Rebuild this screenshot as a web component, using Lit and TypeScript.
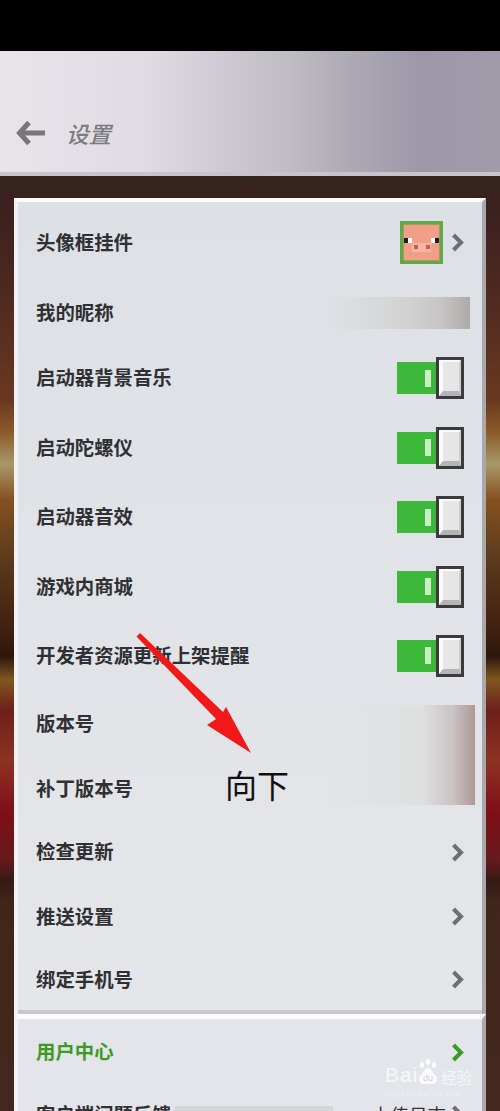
import { LitElement, html, css, svg } from "lit";
import { customElement } from "lit/decorators.js";

const chevron = (cls = "") => html`<svg class="chev ${cls}" viewBox="0 0 14 21"><path d="M3.5 3 L11 10.5 L3.5 18" fill="none" stroke="currentColor" stroke-width="4"/></svg>`;
const toggle = html`<div class="toggle"><div class="track"><i class="mark"></i></div><div class="knob"><i class="shine"></i></div></div>`;

@customElement("app-root")
export class AppRoot extends LitElement {
  static styles = css`
    :host {
      display: block;
      width: 500px;
      height: 1111px;
      overflow: hidden;
      position: relative;
      font-family: "Noto Sans CJK SC", "Liberation Sans", sans-serif;
      background: linear-gradient(to bottom,
        #35241c 176px, #3a2020 200px, #4f2a20 300px, #6a3820 400px, #8a5a28 432px,
        #a8986a 464px, #85501f 500px, #5a3a1c 560px, #40200f 630px, #2e160c 656px,
        #80581f 680px, #6e1f1a 710px, #8c3322 760px, #7f0f18 812px, #661a1c 860px,
        #351a14 880px, #40251a 900px, #44281f 1111px);
    }
    .status { height: 51px; background: #000; }
    .header {
      height: 125px;
      border-bottom: 4px solid #c6c5cb;
      background: linear-gradient(to right, #e9e4ea 0, #e0dae2 150px, #cfcad3 220px, #c0bcc3 290px, #aeaab4 350px, #9d97a8 420px, #a09aa9 500px);
      display: flex;
      align-items: center;
      padding: 43px 0 0 16px;
      box-sizing: border-box;
    }
    .back { width: 30px; height: 26px; color: #77777b; }
    .title {
      margin-left: 20px;
      font-size: 22.5px;
      font-style: italic;
      font-weight: 500;
      color: #7b7a80;
      line-height: 1;
    }
    .card { margin: 22px 14px 0; }
    .panel {
      position: relative;
      background: linear-gradient(to bottom, #dde0e4, #e4e6ea);
      border-top: 4px solid #fbfbfb;
      border-left: 4px solid #f3f1f3;
      border-right: 4px solid #a9a9ad;
    }
    .rule { height: 4px; background: #c8c8cb; }
    .panel.second { background: #e3e5ea; height: 92px; border-top-width: 5px; }
    .row {
      display: flex;
      align-items: center;
      justify-content: space-between;
      padding: 0 18px;
      font-size: 19.4px;
      font-weight: 600;
      color: #2f3033;
      box-sizing: border-box;
    }
    .row > span { margin-top: -3px; }
    .green { color: #3d9a22; }
    .chev { width: 14px; height: 21px; color: #6e6e73; display: block; }
    .chev.g { color: #3a9a26; }
    .side { display: flex; align-items: center; gap: 7px; }
    .avatar { width: 43px; height: 43px; display: block; }
    .toggle { display: flex; align-items: center; }
    .track {
      width: 40px; height: 32px; background: #3db83a;
      display: flex; align-items: center; justify-content: flex-end; padding-right: 6px; box-sizing: border-box;
    }
    .mark { width: 6px; height: 17px; background: #c9f0c2; display: block; }
    .knob {
      width: 28px; height: 42px; box-sizing: border-box; margin-left: -1px;
      border: 3px solid #3a3a3f; background: #e6e6e6; position: relative;
    }
    .shine {
      position: absolute; inset: 0; display: block;
      border-left: 4px solid #fafafa; border-top: 2px solid #fafafa;
      border-bottom: 5px solid #b4b4b4; border-right: 2px solid #cfcfcf;
    }
    .blur-name {
      position: absolute; left: 312px; top: 95px; width: 140px; height: 32px;
      background: linear-gradient(to right, rgba(205,205,205,0), #d2d2d2 55%, #c6c4c4 80%, #aeaaaa);
    }
    .blur-ver {
      position: absolute; left: 307px; top: 503px; width: 150px; height: 100px;
      background: linear-gradient(to right, rgba(224,224,226,0), #e1e2e4 30%, #dedfdf 65%, #cbc3c4 85%, #ae9898);
    }
    .blur-feedback {
      position: absolute; left: 157px; top: 87px; width: 158px; height: 20px;
      background: #d3d5d9;
    }
    .muted { font-weight: 400; font-size: 18.5px; color: #333; display: flex; align-items: center; gap: 4px; margin-top: -2px; }
    .annotation { position: absolute; left: 0; top: 0; width: 500px; height: 1111px; pointer-events: none; }
    .down {
      position: absolute; left: 225px; top: 765px;
      font-size: 32px; line-height: 38px; color: #111; font-weight: 400;
    }
    .wm {
      position: absolute; left: 385px; top: 1058px; width: 90px;
      color: rgba(255,255,255,.72); line-height: 1;
    }
    .wm .line { display: flex; align-items: flex-end; }
    .wm .latin { font-family: "Liberation Sans", sans-serif; font-size: 21px; letter-spacing: 1px; width: 33px; }
    .wm .cn { font-size: 15.5px; margin-left: 3px; color: rgba(255,255,255,.7); }
    .wm .paw { width: 20px; height: 27px; display: block; }
    .wm .sub { font-size: 7.5px; color: rgba(255,255,255,.45); margin-top: 5px; letter-spacing: 1px; font-family: "Liberation Sans", sans-serif; white-space: nowrap; }
  `;

  private rows: [string, number, unknown][] = [
    ["我的昵称", 60, ""],
    ["启动器背景音乐", 70, toggle],
    ["启动陀螺仪", 69, toggle],
    ["启动器音效", 70, toggle],
    ["游戏内商城", 69, toggle],
    ["开发者资源更新上架提醒", 69, toggle],
    ["版本号", 68, ""],
    ["补丁版本号", 62, ""],
    ["检查更新", 64, chevron()],
    ["推送设置", 65, chevron()],
    ["绑定手机号", 61, chevron()],
  ];

  render() {
    return html`
      <div class="status"></div>
      <div class="header">
        <svg class="back" viewBox="0 0 30 26"><path d="M13 2.5 L3.5 13 L13 23.5 M4 13 H29" fill="none" stroke="currentColor" stroke-width="5"/></svg>
        <div class="title">设置</div>
      </div>
      <div class="card">
        <div class="panel first">
          <div class="row" style="height:81px">
            <span>头像框挂件</span>
            <div class="side">
              <svg class="avatar" viewBox="0 0 44 44" shape-rendering="crispEdges">
                <rect width="44" height="44" fill="#5cab4a"/>
                <rect x="3" y="3" width="38" height="38" fill="#b59450"/>
                <rect x="4" y="4" width="36" height="36" fill="#f0a088"/>
                <rect x="12" y="22" width="20" height="10" fill="#f6b4a4"/>
                <rect x="4" y="17" width="4" height="5" fill="#2a1a14"/>
                <rect x="8" y="17" width="4" height="5" fill="#fff"/>
                <rect x="36" y="17" width="4" height="5" fill="#2a1a14"/>
                <rect x="32" y="17" width="4" height="5" fill="#fff"/>
                <rect x="14" y="25" width="4" height="4" fill="#c4624e"/>
                <rect x="27" y="25" width="4" height="4" fill="#c4624e"/>
              </svg>
              ${chevron()}
            </div>
          </div>
          ${this.rows.map(([t, h, right]) => html`
            <div class="row" style="height:${h}px"><span>${t}</span>${right}</div>
          `)}
          <div class="rule"></div>
          <div class="blur-name"></div>
          <div class="blur-ver"></div>
        </div>
        <div class="panel second">
          <div class="row green" style="height:66px"><span>用户中心</span>${chevron("g")}</div>
          <div class="row" style="height:60px">
            <span>客户端问题反馈</span>
            <div class="muted">上传日志 ${chevron()}</div>
          </div>
          <div class="blur-feedback"></div>
        </div>
      </div>
      <svg class="annotation" viewBox="0 0 500 1111">
        ${svg`<path d="M136.500 636.500 L140 633 L223 712 L226 707 L251 753 L207 725 L216 719 Z" fill="#f01818"/>`}
      </svg>
      <div class="down">向下</div>
      <div class="wm">
        <div class="line">
          <span class="latin">Bai</span>
          <svg class="paw" viewBox="0 0 20 27">
            <g fill="rgba(255,255,255,.85)">
              <ellipse cx="4" cy="7" rx="2.200" ry="3"/>
              <ellipse cx="10" cy="4" rx="2.200" ry="3"/>
              <ellipse cx="16" cy="7" rx="2.200" ry="3"/>
              <path d="M10 10 C6 10 6 15 3 17 C-1 20 1 26 6 26 C8 25.500 12 25.500 14 26 C19 26 21 20 17 17 C14 15 14 10 10 10 Z"/>
            </g>
            <text x="10" y="23" text-anchor="middle" font-size="9" font-family="Liberation Sans, sans-serif" fill="#cfd2d8">du</text>
          </svg>
          <span class="cn">经验</span>
        </div>
        <div class="sub">jingyan.baidu.com</div>
      </div>
    `;
  }
}
